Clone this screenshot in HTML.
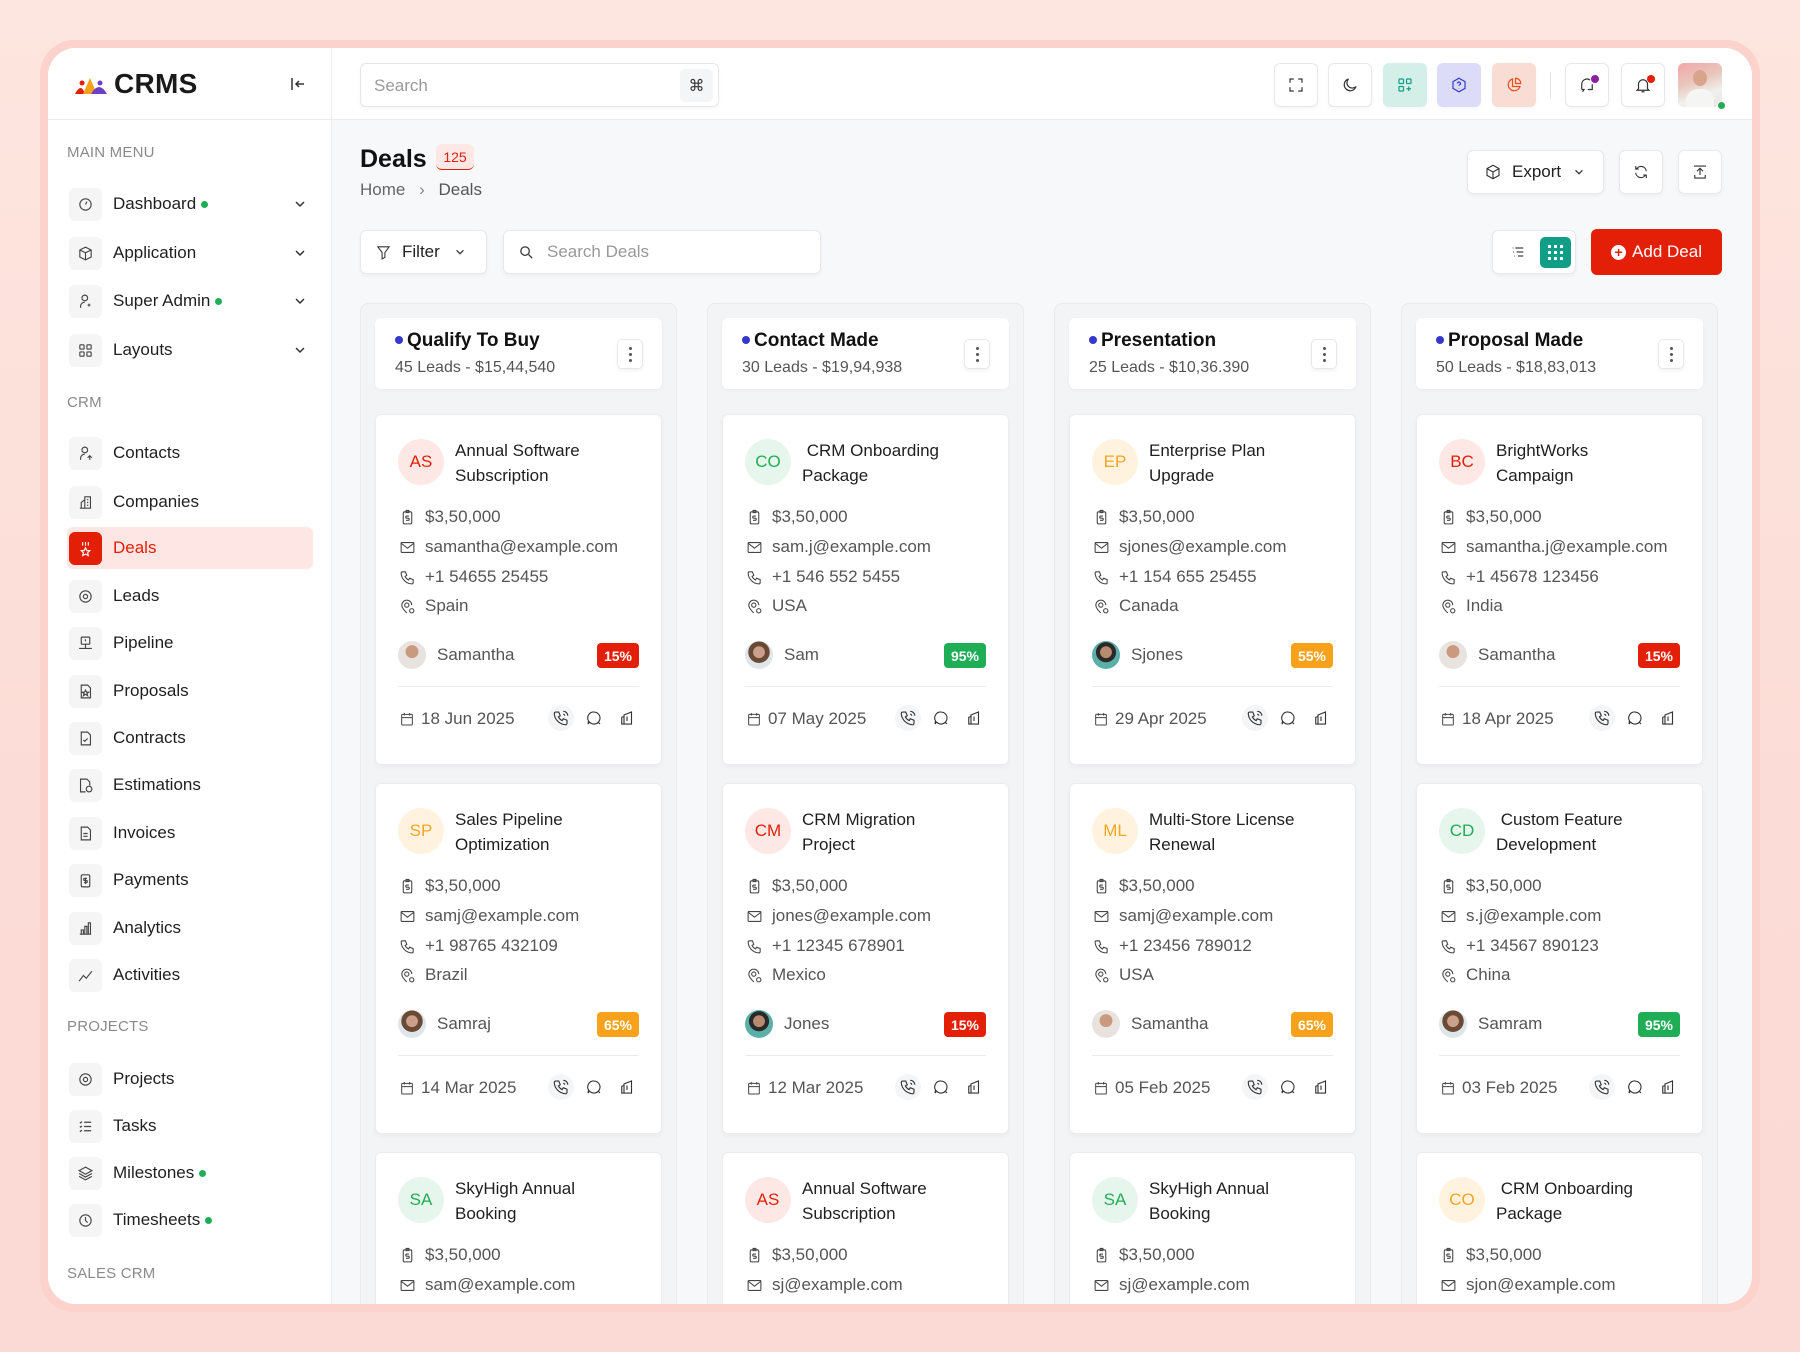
<!DOCTYPE html>
<html><head><meta charset="utf-8">
<style>
*{box-sizing:border-box;margin:0;padding:0}
html,body{width:1800px;height:1352px;overflow:hidden}
body{font-family:"Liberation Sans",sans-serif;background:linear-gradient(180deg,#fde6df 0%,#fcdcd6 60%,#fbd9d5 100%);position:relative;color:#1f1f1f}
.ring{position:absolute;left:40px;top:40px;width:1720px;height:1272px;border-radius:34px;background:#fbd3cc}
.frame{position:absolute;left:48px;top:48px;width:1704px;height:1256px;border-radius:28px;background:#f7f8fa;overflow:hidden}
.side{position:absolute;left:0;top:0;width:284px;height:100%;background:#fff;border-right:1px solid #ececec}
.logo{position:absolute;left:0;top:0;width:284px;height:72px;border-bottom:1px solid #ececec}
.topbar{position:absolute;left:284px;top:0;right:0;height:72px;background:#fff;border-bottom:1px solid #ececec}
.lbl{position:absolute;left:19px;font-size:15px;color:#8a8a8a;letter-spacing:.2px}
.mi{position:absolute;left:21px;width:238px;height:42px;display:flex;align-items:center;font-size:17px;color:#1f1f1f}
.mi .ib{width:33px;height:33px;border-radius:6px;background:#f5f5f5;display:flex;align-items:center;justify-content:center;margin-right:11px}
.mi .ib svg{width:17px;height:17px;stroke:#444;fill:none;stroke-width:1.6}
.mi .chev{position:absolute;right:0;top:14px}
.gd{display:inline-block;width:7px;height:7px;border-radius:50%;background:#1fad56;margin-left:5px;vertical-align:middle}
.tb{position:absolute;top:15px;width:44px;height:44px;border:1px solid #e8e8e8;border-radius:6px;background:#fff;display:flex;align-items:center;justify-content:center;box-shadow:0 2px 4px rgba(0,0,0,.04)}
.tb svg{width:18px;height:18px;fill:none;stroke:#333;stroke-width:1.6}
.btn{position:absolute;background:#fff;border:1px solid #e8e8e8;border-radius:6px;display:flex;align-items:center;box-shadow:0 2px 4px rgba(0,0,0,.04);font-size:17px;color:#222}
.col{position:absolute;top:255px;width:317px;height:1001px;background:#f3f4f6;border:1px solid #e9eaec;border-bottom:none;border-radius:8px 8px 0 0;overflow:hidden}
.hd{position:absolute;left:14px;top:14px;width:287px;height:71px;background:#fff;border-radius:6px;box-shadow:0 1px 3px rgba(0,0,0,.04)}
.hd .t{position:absolute;left:32px;top:12px;font-size:19px;font-weight:bold;color:#111}
.hd .t:before{content:"";position:absolute;left:-12px;top:6px;width:8px;height:8px;border-radius:50%;background:#3538cd}
.hd .s{position:absolute;left:20px;top:41px;font-size:16px;color:#555}
.hd .k{position:absolute;right:19px;top:21px;width:26px;height:30px;border:1px solid #e8e8e8;border-radius:5px;box-shadow:0 2px 3px rgba(0,0,0,.05);display:flex;flex-direction:column;align-items:center;justify-content:center;gap:3px}
.hd .k i{width:3px;height:3px;border-radius:50%;background:#555}
.card{position:absolute;left:14px;width:287px;height:351px;background:#fff;border:1px solid #ececec;border-radius:6px;box-shadow:0 2px 5px rgba(0,0,0,.04);overflow:hidden}
.card.cut{height:152px;border-bottom:none;border-radius:6px 6px 0 0;box-shadow:none}
.av{position:absolute;left:22px;top:24px;width:46px;height:46px;border-radius:50%;display:flex;align-items:center;justify-content:center;font-size:17px}
.r{background:#fde8e5;color:#e41f07}.g{background:#e7f6ec;color:#1fad56}.o{background:#fff3df;color:#f5a524}
.ct{position:absolute;left:79px;top:23px;font-size:17px;line-height:25px;color:#1f1f1f;font-weight:500}
.row{position:absolute;left:23px;font-size:17px;color:#555;display:flex;align-items:center}
.row svg{width:17px;height:17px;fill:none;stroke:#444;stroke-width:1.5;margin-right:9px}
.own{position:absolute;left:22px;top:226px;display:flex;align-items:center;font-size:17px;color:#555}
.own b{width:28px;height:28px;border-radius:50%;margin-right:11px;display:block}
.pc{position:absolute;right:22px;top:228px;width:42px;height:25px;border-radius:4px;color:#fff;font-size:14px;font-weight:bold;display:flex;align-items:center;justify-content:center}
.pr{background:#e41f07}.pg{background:#1fad56}.po{background:#f8a21c}
.dv{position:absolute;left:22px;right:22px;top:271px;height:1px;background:#ebebeb}
.ft{position:absolute;left:23px;top:294px;font-size:17px;color:#555;display:flex;align-items:center}
.ft svg{width:16px;height:16px;fill:none;stroke:#444;stroke-width:1.5;margin-right:6px}
.ic{position:absolute;top:290px;width:26px;height:26px;display:flex;align-items:center;justify-content:center}
.ic svg{width:18px;height:18px;fill:none;stroke:#333;stroke-width:1.5}
</style></head><body>
<div class="ring"></div>
<div class="frame">
<div class="side">
 <div class="logo">
  <svg style="position:absolute;left:25px;top:26px" width="36" height="22" viewBox="0 0 36 22"><path d="M2 20 Q8 8 12 20Z" fill="#e41f07"/><path d="M10 20 L17 4 L24 20Z" fill="#f8a21c"/><path d="M18 20 Q26 6 34 20Z" fill="#6b3fc6"/><circle cx="9" cy="9" r="2.5" fill="#e41f07"/><circle cx="27" cy="9" r="2.5" fill="#6b3fc6"/></svg>
  <div style="position:absolute;left:66px;top:20px;font-size:28px;font-weight:bold;color:#1a1a1a;letter-spacing:.3px">CRMS</div>
  <svg style="position:absolute;left:242px;top:28px" width="16" height="16" viewBox="0 0 16 16" fill="none" stroke="#333" stroke-width="1.5"><path d="M2 2v12M14 8H6M9 5 6 8l3 3"/></svg>
 </div>
 <div class="lbl" style="top:96px">MAIN MENU</div>
 <div class="mi" style="top:135px"><span class="ib"><svg viewBox="0 0 24 24"><circle cx="12" cy="12" r="8"/><path d="M12 12l2-4"/></svg></span>Dashboard<span class="gd"></span><svg class="chev" width="14" height="14" viewBox="0 0 14 14" fill="none" stroke="#333" stroke-width="1.5"><path d="M3 5l4 4 4-4"/></svg></div>
 <div class="mi" style="top:184px"><span class="ib"><svg viewBox="0 0 24 24"><path d="M4 7l8-4 8 4v10l-8 4-8-4zM12 11v10M4 7l8 4 8-4"/></svg></span>Application<svg class="chev" width="14" height="14" viewBox="0 0 14 14" fill="none" stroke="#333" stroke-width="1.5"><path d="M3 5l4 4 4-4"/></svg></div>
 <div class="mi" style="top:232px"><span class="ib"><svg viewBox="0 0 24 24"><circle cx="11" cy="7" r="4"/><path d="M5 21v-2a6 6 0 0 1 6-6M17 15v4M15 17h4"/></svg></span>Super Admin<span class="gd"></span><svg class="chev" width="14" height="14" viewBox="0 0 14 14" fill="none" stroke="#333" stroke-width="1.5"><path d="M3 5l4 4 4-4"/></svg></div>
 <div class="mi" style="top:281px"><span class="ib"><svg viewBox="0 0 24 24"><rect x="4" y="4" width="6" height="6" rx="1"/><rect x="14" y="4" width="6" height="6" rx="1"/><rect x="4" y="14" width="6" height="6" rx="1"/><rect x="14" y="14" width="6" height="6" rx="1"/></svg></span>Layouts<svg class="chev" width="14" height="14" viewBox="0 0 14 14" fill="none" stroke="#333" stroke-width="1.5"><path d="M3 5l4 4 4-4"/></svg></div>
 <div class="lbl" style="top:346px">CRM</div>
 <div class="mi" style="top:384px"><span class="ib"><svg viewBox="0 0 24 24"><circle cx="11" cy="7" r="4"/><path d="M5 21v-2a6 6 0 0 1 6-6M18 21v-6M15 18l3-3 3 3"/></svg></span>Contacts</div>
 <div class="mi" style="top:433px"><span class="ib"><svg viewBox="0 0 24 24"><path d="M4 20h16M6 20v-8l5-4v12M11 20V4h8v16M14 8h2M14 12h2M14 16h2"/></svg></span>Companies</div>
 <div style="position:absolute;left:19px;top:479px;width:246px;height:42px;border-radius:6px;background:#fde6e3"></div>
 <div class="mi" style="top:479px;color:#e41f07"><span class="ib" style="background:#e41f07"><svg viewBox="0 0 24 24" style="stroke:#fff"><path d="M8 3v5M12 3v5M16 3v5M12 11l2 4h4l-3 3 1 4-4-2-4 2 1-4-3-3h4z"/></svg></span>Deals</div>
 <div class="mi" style="top:527px"><span class="ib"><svg viewBox="0 0 24 24"><circle cx="12" cy="12" r="8"/><circle cx="12" cy="12" r="3"/></svg></span>Leads</div>
 <div class="mi" style="top:574px"><span class="ib"><svg viewBox="0 0 24 24"><rect x="6" y="3" width="12" height="10" rx="1"/><path d="M12 6v3M3 19h18M12 13v6"/></svg></span>Pipeline</div>
 <div class="mi" style="top:622px"><span class="ib"><svg viewBox="0 0 24 24"><path d="M6 3h9l4 4v14H6z"/><path d="M12 10l1.5 3h3l-2.5 2 1 3-3-2-3 2 1-3-2.5-2h3z"/></svg></span>Proposals</div>
 <div class="mi" style="top:669px"><span class="ib"><svg viewBox="0 0 24 24"><path d="M6 3h9l4 4v14H6z"/><path d="M9 14l2 2 4-4"/></svg></span>Contracts</div>
 <div class="mi" style="top:716px"><span class="ib"><svg viewBox="0 0 24 24"><path d="M12 21H5V3h9l4 4v5"/><circle cx="17" cy="17" r="4"/></svg></span>Estimations</div>
 <div class="mi" style="top:764px"><span class="ib"><svg viewBox="0 0 24 24"><path d="M6 3h9l4 4v14H6zM9 12h6M9 16h6"/></svg></span>Invoices</div>
 <div class="mi" style="top:811px"><span class="ib"><svg viewBox="0 0 24 24"><rect x="6" y="4" width="12" height="17" rx="2"/><path d="M14 9h-3a1.5 1.5 0 0 0 0 3h2a1.5 1.5 0 0 1 0 3h-3M12 8v9"/></svg></span>Payments</div>
 <div class="mi" style="top:859px"><span class="ib"><svg viewBox="0 0 24 24"><path d="M4 20h16M6 20v-6h3v6M11 20V9h3v11M16 20V4h3v16"/></svg></span>Analytics</div>
 <div class="mi" style="top:906px"><span class="ib"><svg viewBox="0 0 24 24"><path d="M3 20l6-8 4 4 8-10"/></svg></span>Activities</div>
 <div class="lbl" style="top:970px">PROJECTS</div>
 <div class="mi" style="top:1010px"><span class="ib"><svg viewBox="0 0 24 24"><circle cx="12" cy="12" r="8"/><circle cx="12" cy="12" r="3"/></svg></span>Projects</div>
 <div class="mi" style="top:1057px"><span class="ib"><svg viewBox="0 0 24 24"><path d="M10 6h10M10 12h10M10 18h10M4 6l1 1 2-2M4 12l1 1 2-2M4 18l1 1 2-2"/></svg></span>Tasks</div>
 <div class="mi" style="top:1104px"><span class="ib"><svg viewBox="0 0 24 24"><path d="M12 3l9 5-9 5-9-5zM3 12l9 5 9-5M3 16l9 5 9-5"/></svg></span>Milestones<span class="gd"></span></div>
 <div class="mi" style="top:1151px"><span class="ib"><svg viewBox="0 0 24 24"><circle cx="12" cy="12" r="8"/><path d="M12 7v5l3 3"/></svg></span>Timesheets<span class="gd"></span></div>
 <div class="lbl" style="top:1217px">SALES CRM</div>
</div>

<div class="topbar">
 <div style="position:absolute;left:28px;top:15px;width:359px;height:44px;border:1px solid #e6e6e6;border-radius:6px;box-shadow:0 2px 4px rgba(0,0,0,.04)">
  <span style="position:absolute;left:13px;top:12px;font-size:17px;color:#999">Search</span>
  <span style="position:absolute;right:5px;top:5px;width:33px;height:33px;background:#f4f5f7;border-radius:5px;display:flex;align-items:center;justify-content:center;font-size:16px;color:#333">⌘</span>
 </div>
 <div class="tb" style="left:942px"><svg viewBox="0 0 24 24"><path d="M4 9V4h5M15 4h5v5M20 15v5h-5M9 20H4v-5"/></svg></div>
 <div class="tb" style="left:996px"><svg viewBox="0 0 24 24"><path d="M20 14A8 8 0 1 1 10 4a6 6 0 0 0 10 10z"/></svg></div>
 <div class="tb" style="left:1051px;background:#d4efe8;border-color:#d4efe8"><svg viewBox="0 0 24 24" style="stroke:#119e87"><rect x="4" y="4" width="6" height="6" rx="1"/><rect x="14" y="4" width="6" height="6" rx="1"/><rect x="4" y="14" width="6" height="6" rx="1"/><path d="M17 14v6M14 17h6"/></svg></div>
 <div class="tb" style="left:1105px;background:#dcdcf8;border-color:#dcdcf8"><svg viewBox="0 0 24 24" style="stroke:#3538cd"><path d="M12 3l8 4.5v9L12 21l-8-4.5v-9z"/><path d="M10 10a2 2 0 1 1 3 1.7c-.7.4-1 .8-1 1.3M12 16v.5"/></svg></div>
 <div class="tb" style="left:1160px;background:#f9dcd3;border-color:#f9dcd3"><svg viewBox="0 0 24 24" style="stroke:#e8501b"><path d="M20 14A8 8 0 1 1 10 4v10z"/><path d="M14 3a7 7 0 0 1 7 7h-7z"/></svg></div>
 <div style="position:absolute;left:1218px;top:24px;width:1px;height:26px;background:#e5e5e5"></div>
 <div class="tb" style="left:1233px"><svg viewBox="0 0 24 24"><path d="M5 18V11a7 7 0 0 1 11-5.7M5 18h3l-2 3M19 11v7h-6"/></svg><span style="position:absolute;left:25px;top:11px;width:8px;height:8px;border-radius:50%;background:#8a1fa3"></span></div>
 <div class="tb" style="left:1289px"><svg viewBox="0 0 24 24"><path d="M6 17V11a6 6 0 0 1 12 0v6l2 2H4zM10 21h4"/></svg><span style="position:absolute;left:25px;top:11px;width:8px;height:8px;border-radius:50%;background:#e41f07"></span></div>
 <div style="position:absolute;left:1346px;top:15px;width:44px;height:44px;border-radius:6px;background:linear-gradient(160deg,#f0a6a8 0%,#e9c7bd 40%,#f1f0ee 70%,#e8e3e0 100%);overflow:hidden"><div style="position:absolute;left:15px;top:7px;width:14px;height:16px;border-radius:50%;background:#d8a48c"></div><div style="position:absolute;left:8px;top:26px;width:28px;height:20px;border-radius:12px 12px 0 0;background:#f5f5f3"></div></div>
 <span style="position:absolute;left:1385px;top:53px;width:9px;height:9px;border-radius:50%;background:#1fad56;border:1.5px solid #fff"></span>
</div>

<div style="position:absolute;left:312px;top:97px;font-size:25px;font-weight:bold;color:#111">Deals</div>
<div style="position:absolute;left:388px;top:96px;width:38px;height:26px;border-radius:6px;background:#fde8e5;border-bottom:1.5px solid #e41f07;color:#e41f07;font-size:14px;display:flex;align-items:center;justify-content:center">125</div>
<div style="position:absolute;left:312px;top:132px;font-size:17px;color:#666">Home <span style="margin:0 9px;color:#888">›</span> <span style="color:#555">Deals</span></div>

<div class="btn" style="left:1419px;top:102px;width:137px;height:44px;padding-left:16px"><svg width="18" height="18" viewBox="0 0 24 24" fill="none" stroke="#333" stroke-width="1.5"><path d="M12 3l8 4.5v9L12 21l-8-4.5v-9zM4 7.5l8 4.5 8-4.5M12 12v9"/></svg><span style="margin-left:10px">Export</span><svg style="margin-left:12px" width="12" height="12" viewBox="0 0 14 14" fill="none" stroke="#333" stroke-width="1.5"><path d="M3 5l4 4 4-4"/></svg></div>
<div class="btn" style="left:1571px;top:102px;width:44px;height:44px;justify-content:center"><svg width="18" height="18" viewBox="0 0 24 24" fill="none" stroke="#333" stroke-width="1.5"><path d="M19 11a7 7 0 0 0-13-3M5 4v4h4M5 13a7 7 0 0 0 13 3M19 20v-4h-4"/></svg></div>
<div class="btn" style="left:1630px;top:102px;width:44px;height:44px;justify-content:center"><svg width="18" height="18" viewBox="0 0 24 24" fill="none" stroke="#333" stroke-width="1.5"><path d="M4 4h16M12 16V8M8 11l4-4 4 4M5 16v4h14v-4"/></svg></div>

<div class="btn" style="left:312px;top:182px;width:127px;height:44px;padding-left:14px"><svg width="17" height="17" viewBox="0 0 24 24" fill="none" stroke="#333" stroke-width="1.5"><path d="M4 4h16l-6 8v7l-4 2v-9z"/></svg><span style="margin-left:10px">Filter</span><svg style="margin-left:14px" width="12" height="12" viewBox="0 0 14 14" fill="none" stroke="#333" stroke-width="1.5"><path d="M3 5l4 4 4-4"/></svg></div>
<div class="btn" style="left:455px;top:182px;width:318px;height:44px;padding-left:14px;color:#999"><svg width="17" height="17" viewBox="0 0 24 24" fill="none" stroke="#333" stroke-width="1.8"><circle cx="10" cy="10" r="6"/><path d="M15 15l5 5"/></svg><span style="margin-left:12px">Search Deals</span></div>
<div class="btn" style="left:1444px;top:182px;width:84px;height:44px"><svg style="margin-left:17px" width="16" height="16" viewBox="0 0 24 24" fill="none" stroke="#444" stroke-width="1.8"><path d="M8 6h12M10 12h10M12 18h8M4 6h1M5 12h1M6 18h1"/></svg><span style="position:absolute;left:47px;top:6px;width:31px;height:31px;background:#119e87;border-radius:5px;display:grid;grid-template-columns:repeat(3,3px);gap:3px;justify-content:center;align-content:center"><i style="width:3px;height:3px;background:#fff"></i><i style="width:3px;height:3px;background:#fff"></i><i style="width:3px;height:3px;background:#fff"></i><i style="width:3px;height:3px;background:#fff"></i><i style="width:3px;height:3px;background:#fff"></i><i style="width:3px;height:3px;background:#fff"></i><i style="width:3px;height:3px;background:#fff"></i><i style="width:3px;height:3px;background:#fff"></i><i style="width:3px;height:3px;background:#fff"></i></span></div>
<div style="position:absolute;left:1543px;top:181px;width:131px;height:46px;background:#e41f07;border-radius:6px;color:#fff;font-size:17px;display:flex;align-items:center;justify-content:center"><span style="width:15px;height:15px;border-radius:50%;background:#fff;color:#e41f07;font-size:14px;font-weight:bold;display:inline-flex;align-items:center;justify-content:center;margin-right:6px;line-height:1">+</span>Add Deal</div>

<div id="cols"></div>
</div>
<script>
const I={
m:'<svg viewBox="0 0 24 24"><rect x="6" y="4" width="12" height="17" rx="2"/><path d="M10 2h4v3h-4zM14 10h-3a1.5 1.5 0 0 0 0 3h2a1.5 1.5 0 0 1 0 3h-3"/></svg>',
e:'<svg viewBox="0 0 24 24"><rect x="3" y="5" width="18" height="14" rx="1"/><path d="M3 6l9 7 9-7"/></svg>',
p:'<svg viewBox="0 0 24 24"><path d="M5 4h4l2 5-2.5 1.5a11 11 0 0 0 5 5L15 13l5 2v4a2 2 0 0 1-2 2A16 16 0 0 1 3 6a2 2 0 0 1 2-2"/></svg>',
l:'<svg viewBox="0 0 24 24"><circle cx="11" cy="10" r="3"/><path d="M11 21s-7-6-7-11a7 7 0 0 1 14 0"/><circle cx="18" cy="18" r="3"/></svg>',
c:'<svg viewBox="0 0 24 24"><rect x="4" y="5" width="16" height="16" rx="1"/><path d="M4 10h16M8 3v4M16 3v4"/></svg>'};
const cols=[
["Qualify To Buy","45 Leads - $15,44,540",[
["r","AS","Annual Software<br>Subscription","samantha@example.com","+1 54655 25455","Spain","Samantha","pr","15%","18 Jun 2025"],
["o","SP","Sales Pipeline<br>Optimization","samj@example.com","+1 98765 432109","Brazil","Samraj","po","65%","14 Mar 2025"],
["g","SA","SkyHigh Annual<br>Booking","sam@example.com","","","","","",""]]],
["Contact Made","30 Leads - $19,94,938",[
["g","CO","&nbsp;CRM Onboarding<br>Package","sam.j@example.com","+1 546 552 5455","USA","Sam","pg","95%","07 May 2025"],
["r","CM","CRM Migration<br>Project","jones@example.com","+1 12345 678901","Mexico","Jones","pr","15%","12 Mar 2025"],
["r","AS","Annual Software<br>Subscription","sj@example.com","","","","","",""]]],
["Presentation","25 Leads - $10,36.390",[
["o","EP","Enterprise Plan<br>Upgrade","sjones@example.com","+1 154 655 25455","Canada","Sjones","po","55%","29 Apr 2025"],
["o","ML","Multi-Store License<br>Renewal","samj@example.com","+1 23456 789012","USA","Samantha","po","65%","05 Feb 2025"],
["g","SA","SkyHigh Annual<br>Booking","sj@example.com","","","","","",""]]],
["Proposal Made","50 Leads - $18,83,013",[
["r","BC","BrightWorks<br>Campaign","samantha.j@example.com","+1 45678 123456","India","Samantha","pr","15%","18 Apr 2025"],
["g","CD","&nbsp;Custom Feature<br>Development","s.j@example.com","+1 34567 890123","China","Samram","pg","95%","03 Feb 2025"],
["o","CO","&nbsp;CRM Onboarding<br>Package","sjon@example.com","","","","","",""]]]];
const avs=["radial-gradient(circle at 50% 38%,#c99a80 0 28%,#e8e3df 30%)","radial-gradient(circle at 50% 40%,#caa08a 0 26%,#6b4a35 28% 48%,#dfe6ea 50%)","radial-gradient(circle at 50% 40%,#b88a70 0 26%,#2a2a2a 28% 45%,#5ab0a8 47%)"];
let h='';
cols.forEach((c,ci)=>{
 h+=`<div class="col" style="left:${312+ci*347}px"><div class="hd"><div class="t">${c[0]}</div><div class="s">${c[1]}</div><div class="k"><i></i><i></i><i></i></div></div>`;
 c[2].forEach((d,di)=>{
  h+=`<div class="card${d[4]?'':' cut'}" style="top:${110+di*369}px"><div class="av ${d[0]}">${d[1]}</div><div class="ct">${d[2]}</div>
  <div class="row" style="top:92px">${I.m}$3,50,000</div><div class="row" style="top:122px">${I.e}${d[3]}</div>`;
  if(d[4]){h+=`<div class="row" style="top:152px">${I.p}${d[4]}</div><div class="row" style="top:181px">${I.l}${d[5]}</div>
  <div class="own"><b style="background:${avs[(ci+di)%3]}"></b>${d[6]}</div><div class="pc ${d[7]}">${d[8]}</div>
  <div class="dv"></div><div class="ft">${I.c}${d[9]}</div>
  <div class="ic" style="left:172px;background:#f4f5f7;border-radius:50%"><svg viewBox="0 0 24 24"><path d="M5 4h4l2 5-2.5 1.5a11 11 0 0 0 5 5L15 13l5 2v4a2 2 0 0 1-2 2A16 16 0 0 1 3 6a2 2 0 0 1 2-2M15 3a6 6 0 0 1 6 6M15 7a2 2 0 0 1 2 2"/></svg></div>
  <div class="ic" style="left:205px"><svg viewBox="0 0 24 24"><path d="M12 4a8 8 0 1 1-6 13.3L4 20l.7-4A8 8 0 0 1 12 4zM17 17l3 3"/></svg></div>
  <div class="ic" style="left:238px"><svg viewBox="0 0 24 24"><path d="M8 20V8l10-4v16zM8 20H5V11l3-1M12 10v6"/></svg></div>`;}
  h+='</div>';
 });
 h+='</div>';
});
document.getElementById('cols').outerHTML=h;
</script>
</body></html>
